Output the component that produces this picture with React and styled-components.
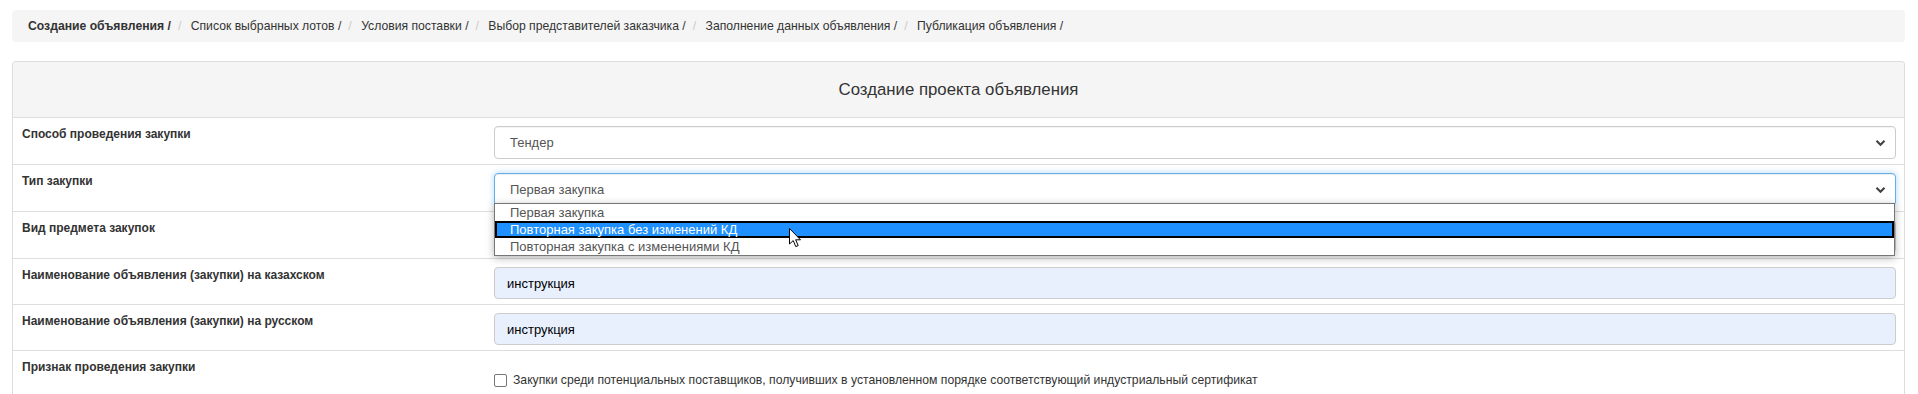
import React from 'react';
import styled, { createGlobalStyle } from 'styled-components';

const GlobalStyle = createGlobalStyle`
  html, body {
    margin: 0;
    padding: 0;
    background: #fff;
    font-family: "Liberation Sans", Arial, sans-serif;
    font-size: 12px;
    color: #333;
  }
`;

const Page = styled.div`
  padding: 10px 13px 0 12px;
  height: 394px;
  overflow: hidden;
  box-sizing: border-box;
`;

const Breadcrumb = styled.ol`
  display: flex;
  list-style: none;
  margin: 0 0 19px;
  padding: 8px 16px;
  height: 32px;
  box-sizing: border-box;
  background: #f5f5f5;
  border-radius: 4px;
  line-height: 16px;
  font-size: 12.2px;

  li + li::before {
    content: "/\\00a0";
    padding: 0 6px 0 7px;
    color: #ccc;
    font-weight: 400;
  }
`;

const Crumb = styled.li`
  color: #333;
  font-weight: ${p => (p.$active ? 700 : 400)};
  white-space: nowrap;
`;

const Panel = styled.div`
  border: 1px solid #ddd;
  border-bottom: none;
  border-radius: 4px 4px 0 0;
`;

const PanelHeading = styled.div`
  height: 55px;
  display: flex;
  align-items: center;
  justify-content: center;
  background: #f5f5f5;
  border-bottom: 1px solid #ddd;
  border-radius: 3px 3px 0 0;
  font-size: 16.8px;
  color: #333;
`;

const Row = styled.div`
  display: grid;
  grid-template-columns: 472px 1fr;
  padding: 8px 8px ${p => (p.$last ? '20px' : '5px')} 9px;
  border-bottom: ${p => (p.$last ? 'none' : '1px solid #ddd')};
  position: relative;
`;

const Label = styled.div`
  font-weight: 700;
  line-height: 17px;
  color: #333;
`;

const Field = styled.div`
  position: relative;
`;

const SelectBox = styled.div`
  height: 33px;
  box-sizing: border-box;
  display: flex;
  align-items: center;
  justify-content: space-between;
  padding: 0 9px 0 15px;
  background: #fff;
  border: 1px solid ${p => (p.$focus ? '#66afe9' : '#ccc')};
  border-radius: 4px;
  box-shadow: ${p =>
    p.$focus
      ? 'inset 0 1px 1px rgba(0,0,0,.075), 0 0 6px rgba(102,175,233,.5)'
      : 'inset 0 1px 1px rgba(0,0,0,.05)'};
  font-size: 13px;
  color: #555;
`;

const Input = styled.div`
  height: 32px;
  box-sizing: border-box;
  display: flex;
  align-items: center;
  padding: 0 12px;
  background: #e8f0fe;
  border: 1px solid #ccc;
  border-radius: 4px;
  font-size: 13px;
  color: #000;
`;

const OptionList = styled.div`
  position: absolute;
  top: 30px;
  left: 0;
  right: 1px;
  background: #fff;
  border: 1px solid #767676;
  box-shadow: 0 2px 8px rgba(0, 0, 0, 0.3);
  z-index: 5;
`;

const Option = styled.div`
  height: 17px;
  box-sizing: border-box;
  line-height: 15px;
  padding-left: 15px;
  font-size: 13px;
  color: ${p => (p.$selected ? '#fff' : '#555')};
  background: ${p => (p.$selected ? '#1e90ff' : '#fff')};
  border-style: solid;
  border-color: ${p => (p.$selected ? '#000' : 'transparent')};
  border-width: 1px 0;
  ${p => p.$selected && 'border-width: 2px; line-height: 13px; padding-left: 13px;'}
`;

const Cursor = styled.svg`
  position: absolute;
  left: 294px;
  top: 24px;
  z-index: 6;
`;

const CheckWrap = styled.label`
  display: flex;
  align-items: center;
  gap: 6px;
  padding-top: 14px;
  font-size: 12.2px;
  color: #333;
`;

const CheckBox = styled.span`
  width: 11px;
  height: 11px;
  border: 1px solid #767676;
  border-radius: 2px;
  background: #fff;
  flex: none;
`;

const Chevron = () => (
  <svg width="11" height="8" viewBox="0 0 11 8">
    <path d="M1.5 1.8 L5.5 5.8 L9.5 1.8" fill="none" stroke="#444" strokeWidth="2.2" />
  </svg>
);

const crumbs = [
  'Создание объявления /',
  'Список выбранных лотов /',
  'Условия поставки /',
  'Выбор представителей заказчика /',
  'Заполнение данных объявления /',
  'Публикация объявления /',
];

const options = [
  'Первая закупка',
  'Повторная закупка без изменений КД',
  'Повторная закупка с изменениями КД',
];

export default function App() {
  return (
    <>
      <GlobalStyle />
      <Page>
        <Breadcrumb>
          {crumbs.map((c, i) => (
            <Crumb key={c} $active={i === 0}>{c}</Crumb>
          ))}
        </Breadcrumb>

        <Panel>
          <PanelHeading>Создание проекта объявления</PanelHeading>

          <Row>
            <Label>Способ проведения закупки</Label>
            <Field>
              <SelectBox>
                <span>Тендер</span>
                <Chevron />
              </SelectBox>
            </Field>
          </Row>

          <Row>
            <Label>Тип закупки</Label>
            <Field>
              <SelectBox $focus>
                <span>Первая закупка</span>
                <Chevron />
              </SelectBox>
              <OptionList>
                {options.map((o, i) => (
                  <Option key={o} $selected={i === 1}>{o}</Option>
                ))}
                <Cursor width="13" height="20" viewBox="0 0 13 20">
                  <path
                    d="M0.5 0.5 L0.5 16 L4.2 12.6 L6.8 18.6 L9.2 17.6 L6.7 11.8 L11.5 11.8 Z"
                    fill="#fff"
                    stroke="#000"
                    strokeWidth="1"
                    strokeLinejoin="round"
                  />
                </Cursor>
              </OptionList>
            </Field>
          </Row>

          <Row>
            <Label>Вид предмета закупок</Label>
            <Field>
              {/* covered by the open option list above */}
              <SelectBox>
                <span />
                <Chevron />
              </SelectBox>
            </Field>
          </Row>

          <Row>
            <Label>Наименование объявления (закупки) на казахском</Label>
            <Field>
              <Input>инструкция</Input>
            </Field>
          </Row>

          <Row>
            <Label>Наименование объявления (закупки) на русском</Label>
            <Field>
              <Input>инструкция</Input>
            </Field>
          </Row>

          <Row $last>
            <Label>Признак проведения закупки</Label>
            <Field>
              <CheckWrap>
                <CheckBox />
                Закупки среди потенциальных поставщиков, получивших в установленном порядке соответствующий индустриальный сертификат
              </CheckWrap>
            </Field>
          </Row>
        </Panel>
      </Page>
    </>
  );
}
